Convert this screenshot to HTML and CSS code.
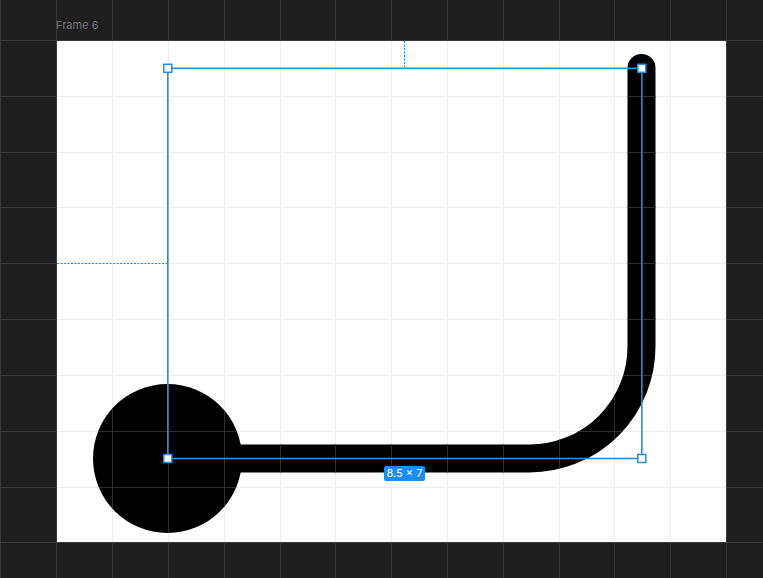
FILE: index.html
```html
<!DOCTYPE html>
<html>
<head>
<meta charset="utf-8">
<link rel="stylesheet" href="styles.css">
</head>
<body>
<div class="canvas">
  <svg class="scene" width="763" height="578" viewBox="0 0 763 578" xmlns="http://www.w3.org/2000/svg">
    <defs>
      <g id="vlines">
        <line x1="0.5" y1="0" x2="0.5" y2="578"/>
        <line x1="56.5" y1="0" x2="56.5" y2="578"/>
        <line x1="112.5" y1="0" x2="112.5" y2="578"/>
        <line x1="168.5" y1="0" x2="168.5" y2="578"/>
        <line x1="224.5" y1="0" x2="224.5" y2="578"/>
        <line x1="280.5" y1="0" x2="280.5" y2="578"/>
        <line x1="335.5" y1="0" x2="335.5" y2="578"/>
        <line x1="391.5" y1="0" x2="391.5" y2="578"/>
        <line x1="447.5" y1="0" x2="447.5" y2="578"/>
        <line x1="503.5" y1="0" x2="503.5" y2="578"/>
        <line x1="559.5" y1="0" x2="559.5" y2="578"/>
        <line x1="614.5" y1="0" x2="614.5" y2="578"/>
        <line x1="670.5" y1="0" x2="670.5" y2="578"/>
        <line x1="726.5" y1="0" x2="726.5" y2="578"/>
      </g>
      <g id="hlines">
        <line x1="0" y1="40.5" x2="763" y2="40.5"/>
        <line x1="0" y1="96.5" x2="763" y2="96.5"/>
        <line x1="0" y1="152.5" x2="763" y2="152.5"/>
        <line x1="0" y1="207.5" x2="763" y2="207.5"/>
        <line x1="0" y1="263.5" x2="763" y2="263.5"/>
        <line x1="0" y1="319.5" x2="763" y2="319.5"/>
        <line x1="0" y1="375.5" x2="763" y2="375.5"/>
        <line x1="0" y1="431.5" x2="763" y2="431.5"/>
        <line x1="0" y1="487.5" x2="763" y2="487.5"/>
        <line x1="0" y1="542.5" x2="763" y2="542.5"/>
      </g>
      <g id="grid">
        <use href="#vlines"/>
        <use href="#hlines"/>
      </g>
      <clipPath id="frameInner">
        <rect x="57" y="41" width="669" height="501"/>
      </clipPath>
      <mask id="shapeMask" maskUnits="userSpaceOnUse" x="0" y="0" width="763" height="578">
        <rect x="0" y="0" width="763" height="578" fill="black"/>
        <path d="M641.5 68 L641.5 346 A112 112 0 0 1 529.5 458.5 L167 458.5" fill="none" stroke="white" stroke-width="28" stroke-linecap="round"/>
        <circle cx="167.5" cy="458.5" r="74.5" fill="white"/>
      </mask>
    </defs>

    <rect x="0" y="0" width="763" height="578" fill="#1f1f1f"/>
    <g stroke="#3a3a3a" stroke-width="1"><use href="#grid"/></g>

    <rect x="57" y="41" width="669" height="501" fill="#ffffff"/>
    <g stroke="#eeeeee" stroke-width="1" clip-path="url(#frameInner)"><use href="#grid"/></g>

    <g clip-path="url(#frameInner)">
      <path d="M641.5 68 L641.5 346 A112 112 0 0 1 529.5 458.5 L167 458.5" fill="none" stroke="#000" stroke-width="28" stroke-linecap="round"/>
      <circle cx="167.5" cy="458.5" r="74.5" fill="#000"/>
      <g stroke="#2e2e2e" stroke-width="1" mask="url(#shapeMask)"><use href="#grid"/></g>
    </g>

    <line x1="57" y1="263.5" x2="167" y2="263.5" stroke="#1c8fea" stroke-width="1.2" stroke-dasharray="2 1.5"/>
    <line x1="404.5" y1="41" x2="404.5" y2="67" stroke="#1c8fea" stroke-width="1.2" stroke-dasharray="2 1.5"/>
    <rect x="167.8" y="68.3" width="474" height="390.2" fill="none" stroke="#1c8fea" stroke-width="1.6"/>
    <rect x="163.8" y="64.3" width="8" height="8" fill="#fff" stroke="#1c8fea" stroke-width="1.5"/>
    <rect x="637.8" y="64.3" width="8" height="8" fill="#fff" stroke="#1c8fea" stroke-width="1.5"/>
    <rect x="163.8" y="454.5" width="8" height="8" fill="#fff" stroke="#1c8fea" stroke-width="1.5"/>
    <rect x="637.8" y="454.5" width="8" height="8" fill="#fff" stroke="#1c8fea" stroke-width="1.5"/>
  </svg>
  <div class="frame-label">Frame 6</div>
  <div class="size-badge">8.5 × 7</div>
</div>
</body>
</html>
```
FILE: styles.css
```css
html, body {
  margin: 0;
  padding: 0;
  background: #1f1f1f;
  overflow: hidden;
}
.canvas {
  position: relative;
  width: 763px;
  height: 578px;
  font-family: Inter, "Noto Sans", "Liberation Sans", sans-serif;
}
.scene {
  display: block;
}
.frame-label {
  position: absolute;
  left: 56px;
  top: 18px;
  font-size: 11px;
  line-height: 14px;
  color: #737373;
  white-space: nowrap;
}
.size-badge {
  position: absolute;
  left: 384px;
  top: 466px;
  width: 41px;
  height: 15px;
  border-radius: 2px;
  background: #1c8fea;
  color: #ffffff;
  font-size: 11px;
  line-height: 15px;
  text-align: center;
  white-space: nowrap;
}
```
